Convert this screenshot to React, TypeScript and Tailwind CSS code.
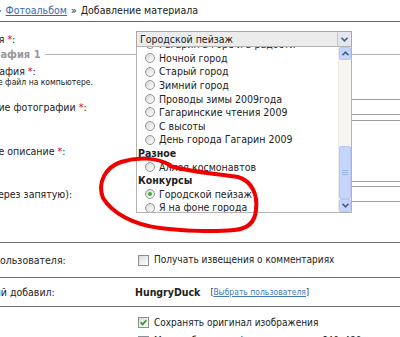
import React from "react";

type Row = { label: string; group?: boolean; checked?: boolean };

const options: Row[] = [
  { label: "Гагарин в горе и в радости" },
  { label: "Ночной город" },
  { label: "Старый город" },
  { label: "Зимний город" },
  { label: "Проводы зимы 2009года" },
  { label: "Гагаринские чтения 2009" },
  { label: "С высоты" },
  { label: "День города Гагарин 2009" },
  { label: "Разное", group: true },
  { label: "Аллея космонавтов" },
  { label: "Конкурсы", group: true },
  { label: "Городской пейзаж", checked: true },
  { label: "Я на фоне города" },
];

function Chevron({ up }: { up?: boolean }) {
  return (
    <svg width="7" height="5" viewBox="0 0 7 5">
      <path
        d={up ? "M0.5 4.2 L3.5 1.2 L6.5 4.2" : "M0.5 0.8 L3.5 3.8 L6.5 0.8"}
        fill="none"
        stroke="#4d6185"
        strokeWidth="1.7"
      />
    </svg>
  );
}

function Radio({ checked }: { checked?: boolean }) {
  return (
    <span className="w-[10px] h-[10px] shrink-0 rounded-full border border-[#8e959c] bg-gradient-to-br from-[#d9d9d2] to-white flex items-center justify-center">
      {checked && <span className="w-[4px] h-[4px] rounded-full bg-[#3fae3f]" />}
    </span>
  );
}

function Checkbox({ checked }: { checked?: boolean }) {
  return (
    <span className="w-[11px] h-[11px] shrink-0 border border-[#8c9096] bg-gradient-to-br from-[#dcdcd6] to-white flex items-center justify-center">
      {checked && (
        <svg width="7" height="7" viewBox="0 0 7 7">
          <path d="M0.6 3.4 L2.6 5.4 L6.4 1.2" fill="none" stroke="#21a121" strokeWidth="1.7" />
        </svg>
      )}
    </span>
  );
}

function Req() {
  return <span className="ml-[3px] text-[#d40000]">*</span>;
}

function Dropdown() {
  return (
    <div className="relative w-[216px] h-[16px]">
      <div className="h-full border border-[#a7a7a7] bg-[#ececec] flex items-center">
        <span className="flex-1 pl-[3px] whitespace-nowrap">Городской пейзаж</span>
        <span className="w-[14px] h-full border-l border-[#c4c4c4] bg-[#e4e8ee] flex items-center justify-center">
          <Chevron />
        </span>
      </div>
      <div className="absolute z-10 left-0 top-[15px] w-[216px] h-[167px] border border-[#b3b3b3] bg-white flex">
        <div className="flex-1 overflow-hidden">
          <div className="-mt-[9.4px]">
            {options.map((o) =>
              o.group ? (
                <div key={o.label} className="h-[13.6px] pl-[1px] flex items-center font-bold whitespace-nowrap">
                  {o.label}
                </div>
              ) : (
                <div key={o.label} className="h-[13.6px] pl-[8px] flex items-center gap-[4px] whitespace-nowrap">
                  <Radio checked={o.checked} />
                  <span>{o.label}</span>
                </div>
              )
            )}
          </div>
        </div>
        <div className="w-[13px] bg-[#f6f5f0] border-l border-[#ecebe4] flex flex-col">
          <div className="h-[13px] rounded-[2px] border border-[#b7c8f3] bg-[#c6d5fb] flex items-center justify-center">
            <Chevron up />
          </div>
          <div className="flex-1" />
          <div className="h-[53px] rounded-[2px] border border-[#b7c8f3] bg-[#c6d5fb] flex flex-col items-center justify-center gap-[1px]">
            <span className="w-[6px] h-px bg-[#9fb4ec]" />
            <span className="w-[6px] h-px bg-[#9fb4ec]" />
            <span className="w-[6px] h-px bg-[#9fb4ec]" />
          </div>
          <div className="h-[13px] rounded-[2px] border border-[#b7c8f3] bg-[#c6d5fb] flex items-center justify-center">
            <Chevron />
          </div>
        </div>
      </div>
    </div>
  );
}

export default function App() {
  return (
    <div className="relative w-[400px] h-[337px] overflow-hidden bg-white text-[10.5px] leading-none text-[#222] font-['DejaVu_Sans_Condensed','DejaVu_Sans',sans-serif] font-stretch-condensed">
      <div className="-ml-[48px] w-[620px]">
        <div className="h-[22px] border-b border-[#666] flex items-center whitespace-nowrap">
          <span className="-ml-[1px]">Главная</span>
          <span className="px-[4px]">»</span>
          <span className="text-[#3a6aa8] underline">Фотоальбом</span>
          <span className="px-[4px]">»</span>
          <span>Добавление материала</span>
        </div>

        <div className="flex items-start pt-[9px] h-[27px]">
          <div className="w-[184px] h-[16px] flex items-center whitespace-nowrap">
            Категория<Req />:
          </div>
          <Dropdown />
        </div>

        <div className="h-[10px] flex items-center gap-[4px] pl-[7px]">
          <span className="font-bold text-[11px] text-[#999] whitespace-nowrap">Фотография 1</span>
          <span className="flex-1 h-px bg-[#b5b5b5]" />
        </div>

        <div className="pl-[11px] flex items-start h-[36px] pt-[6px]">
          <div className="w-[173px] whitespace-nowrap">
            <div className="h-[12px] flex items-center">
              Фотография<Req />:
            </div>
            <div className="h-[10px] flex items-center text-[8.5px]">Выберите файл на компьютере.</div>
          </div>
          <div className="w-[200px] h-[18px] border border-[#a0a0a0]" />
        </div>

        <div className="pl-[11px] flex items-center mt-[4px]">
          <div className="w-[173px] whitespace-nowrap">
            Название фотографии<Req />:
          </div>
          <div className="w-[320px] h-[16px] border border-[#9c9c9c]" />
        </div>

        <div className="pl-[11px] flex items-center mt-[5px]">
          <div className="w-[173px] whitespace-nowrap">
            Краткое описание<Req />:
          </div>
          <div className="w-[320px] h-[62px] border border-[#9c9c9c]" />
        </div>

        <div className="pl-[11px] flex items-center mt-[4px]">
          <div className="w-[173px] whitespace-nowrap">Теги (через запятую):</div>
          <div className="w-[320px] h-[16px] border border-[#9c9c9c]" />
        </div>

        <div className="mt-[40px] border-t border-[#707070] h-[35px] flex items-center">
          <div className="w-[184px] whitespace-nowrap">Данные пользователя:</div>
          <div className="flex items-center gap-[5px] pl-[2px] whitespace-nowrap text-[10px]">
            <Checkbox />
            <span>Получать извещения о комментариях</span>
          </div>
        </div>

        <div className="border-t border-[#707070] h-[29px] flex items-center">
          <div className="w-[183px] whitespace-nowrap">Последний добавил:</div>
          <span className="font-bold">HungryDuck</span>
          <span className="ml-[10px] text-[8.5px]">
            [<span className="text-[#4677b3] underline">Выбрать пользователя</span>]
          </span>
        </div>

        <div className="border-t border-[#707070] pt-[8px] text-[10px]">
          <div className="h-[15px] flex items-center">
            <div className="w-[184px]" />
            <div className="flex items-center gap-[5px] pl-[2px] whitespace-nowrap">
              <Checkbox checked />
              <span>Сохранять оригинал изображения</span>
            </div>
          </div>
          <div className="h-[22px] flex items-center">
            <div className="w-[184px]" />
            <div className="flex items-center gap-[5px] pl-[2px] whitespace-nowrap">
              <Checkbox />
              <span>Масштабировать фото до размера 640x480</span>
            </div>
          </div>
        </div>
      </div>

      <svg className="absolute z-20 inset-0 pointer-events-none" width="400" height="337" viewBox="0 0 400 337">
        <path
          d="M170 166 C190 172 218 174 238 177 C252 181 258 195 256 210 C255 222 248 229 234 230 C214 232 182 231 160 228 C134 225 112 213 103 198 C97 182 106 167 121 162 C137 157 156 157 170 165"
          fill="none"
          stroke="#ee0000"
          strokeWidth="4"
          strokeLinecap="round"
        />
      </svg>
    </div>
  );
}
